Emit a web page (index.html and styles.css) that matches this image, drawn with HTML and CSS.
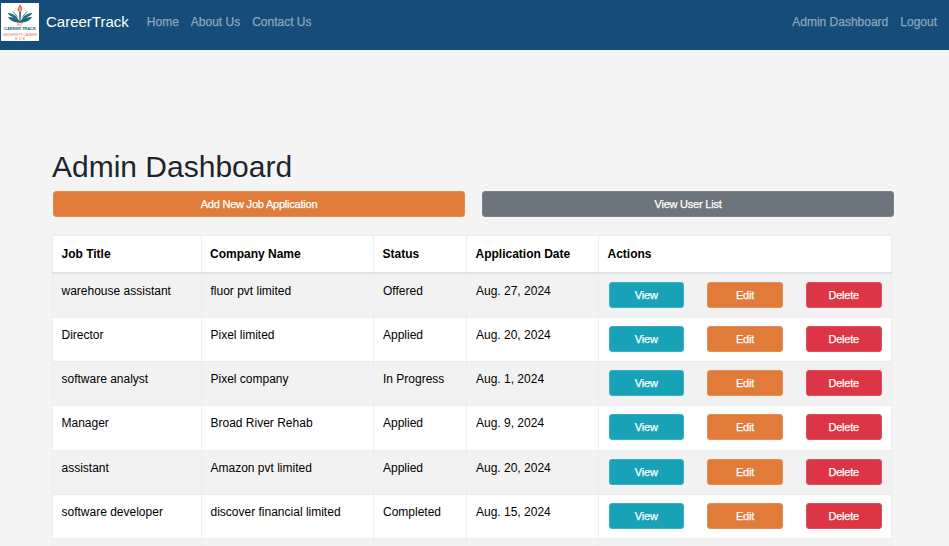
FILE: index.html
```html
<!DOCTYPE html>
<html lang="en">
<head>
<meta charset="utf-8">
<title>Admin Dashboard</title>
<link rel="stylesheet" href="styles.css">
</head>
<body>
<nav class="navbar">
  <svg class="logo" viewBox="0 0 38 38" role="img" aria-label="CareerTrack logo">
    <rect width="38" height="38" fill="#fff"/>
    <path d="M18.8 1C20.5 3 22 5.200 20.800 7.500L19 9.200L17 7.800C15.500 5.500 18.500 4 18.800 1Z" fill="#e8663f"/>
    <path d="M19 4.500V9" stroke="#fff" stroke-width=".8"/>
    <path d="M18 8.500h2.200l-.4 9h-1.400z" fill="#667078"/>
    <path d="M6.500 10C11 10 15 12 17.500 17C13 14.500 9.500 14 6.500 10ZM31.500 10C27 10 23 12 20.500 17C25 14.500 28.500 14 31.500 10Z" fill="#216a7d"/>
    <path d="M7 14C12 14 16 15 19 18C22 15 26 14 31 14C29 18 24 19.500 19 19.800C14 19.500 9 18 7 14Z" fill="#216a7d"/>
    <path d="M12 8.500l5 6M26 8.500l-5 6" stroke="#4d8795" stroke-width="1"/>
    <text x="19" y="22.700" class="logo-tiny" textLength="6">EST</text>
    <text x="19" y="27" class="logo-name" textLength="32">CAREER TRACK</text>
    <text x="19" y="32.600" class="logo-tiny" textLength="34">UNIVERSITY CAREER</text>
    <text x="19" y="36.800" class="logo-tiny" textLength="10">HUB</text>
  </svg>
  <a class="brand">CareerTrack</a>
  <div class="links">
    <a>Home</a><a>About Us</a><a>Contact Us</a>
  </div>
  <div class="links account">
    <a>Admin Dashboard</a><a>Logout</a>
  </div>
</nav>
<main class="container">
  <h1>Admin Dashboard</h1>
  <div class="toolbar">
    <a class="btn edit">Add New Job Application</a>
    <a class="btn secondary">View User List</a>
  </div>
  <table class="jobs">
    <colgroup><col class="c-title"><col class="c-company"><col class="c-status"><col class="c-date"><col class="c-actions"></colgroup>
    <thead>
      <tr><th>Job Title</th><th>Company Name</th><th>Status</th><th>Application Date</th><th>Actions</th></tr>
    </thead>
    <tbody>
      <tr><td>warehouse assistant</td><td>fluor pvt limited</td><td>Offered</td><td>Aug. 27, 2024</td><td><div class="actions"><a class="btn view">View</a><a class="btn edit">Edit</a><a class="btn delete">Delete</a></div></td></tr>
      <tr><td>Director</td><td>Pixel limited</td><td>Applied</td><td>Aug. 20, 2024</td><td><div class="actions"><a class="btn view">View</a><a class="btn edit">Edit</a><a class="btn delete">Delete</a></div></td></tr>
      <tr><td>software analyst</td><td>Pixel company</td><td>In Progress</td><td>Aug. 1, 2024</td><td><div class="actions"><a class="btn view">View</a><a class="btn edit">Edit</a><a class="btn delete">Delete</a></div></td></tr>
      <tr><td>Manager</td><td>Broad River Rehab</td><td>Applied</td><td>Aug. 9, 2024</td><td><div class="actions"><a class="btn view">View</a><a class="btn edit">Edit</a><a class="btn delete">Delete</a></div></td></tr>
      <tr><td>assistant</td><td>Amazon pvt limited</td><td>Applied</td><td>Aug. 20, 2024</td><td><div class="actions"><a class="btn view">View</a><a class="btn edit">Edit</a><a class="btn delete">Delete</a></div></td></tr>
      <tr><td>software developer</td><td>discover financial limited</td><td>Completed</td><td>Aug. 15, 2024</td><td><div class="actions"><a class="btn view">View</a><a class="btn edit">Edit</a><a class="btn delete">Delete</a></div></td></tr>
      <tr class="next"><td></td><td></td><td></td><td></td><td></td></tr>
    </tbody>
  </table>
</main>
</body>
</html>
```
FILE: styles.css
```css
* { box-sizing: border-box; }
body {
  margin: 0;
  height: 546px;
  overflow: hidden;
  background: #f4f4f4;
  color: #000;
  font-family: "Liberation Sans", Arial, sans-serif;
  font-size: 12px;
}
.navbar {
  display: flex;
  align-items: flex-start;
  height: 50px;
  padding: 3px 12px 0 1px;
  background: #164c7a;
}
.logo { width: 38px; height: 38px; }
.logo-name { font-size: 4.200px; font-weight: bold; fill: #216a7d; text-anchor: middle; }
.logo-tiny { font-size: 3.200px; fill: #e8663f; text-anchor: middle; }
.brand {
  margin: 8px 18px 0 7px;
  color: #fff;
  font-size: 15px;
  line-height: 22px;
}
.links {
  display: flex;
  gap: 12px;
  margin-top: 8px;
  color: #8ba6bd;
  line-height: 22px;
  -webkit-text-stroke: .25px;
}
.account { margin-left: auto; }
.container { padding: 99px 57px 0 52px; }
h1 {
  margin: 0;
  color: #212529;
  font-size: 30px;
  font-weight: 400;
  line-height: 36px;
}
.toolbar {
  display: flex;
  gap: 17px;
  margin: 6px -2px 18px 1px;
}
.toolbar .btn { flex: 1; }
.btn {
  display: block;
  height: 26px;
  border: 1px solid;
  border-radius: 3px;
  color: #fff;
  font-size: 11px;
  letter-spacing: -.22px;
  line-height: 24px;
  text-align: center;
  -webkit-text-stroke: .25px #fff;
}
.edit { background: #e07b39; border-color: #e58d55; }
.secondary { background: #6c757d; border-color: #7b838a; }
.view { background: #17a2b8; border-color: #3ab0c3; }
.delete { background: #dc3545; border-color: #e1505e; }
.jobs {
  width: 840px;
  table-layout: fixed;
  border-collapse: collapse;
  background: #fff;
}
.c-title { width: 148.500px; }
.c-company { width: 172.500px; }
.c-status { width: 93px; }
.c-date { width: 132px; }
th, td {
  border: 1px solid #ebedef;
  padding: 8px 9px;
  line-height: 18px;
  text-align: left;
  vertical-align: top;
}
th { height: 37px; padding: 9px 8.500px 8px; border-bottom: 2px solid #dee2e6; font-weight: 700; }
td { height: 44.200px; }
td:first-child, th:first-child { padding-left: 8.500px; }
tbody tr:first-child td { height: 45px; }
td:last-child { padding: 8px 9.500px 0; }
tbody tr.next td { height: 8px; padding: 0; }
tbody tr:nth-child(odd) { background: #f2f2f2; }
.actions {
  display: flex;
  justify-content: space-between;
}
.actions .btn { width: 75.500px; }
```
